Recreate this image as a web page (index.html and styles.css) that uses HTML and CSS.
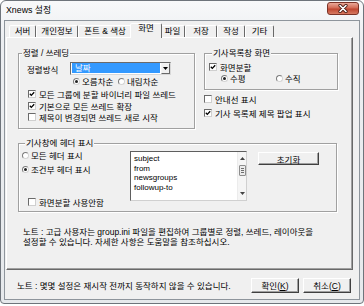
FILE: index.html
```html
<!DOCTYPE html>
<html>
<head>
  <title>Xnews 설정</title>
  <link rel="stylesheet" href="styles.css">
</head>
<body>
  <div class="window">
    <!-- Title bar -->
    <div class="titlebar">
      <span class="title">Xnews 설정</span>
      <button class="close-btn">
        <svg width="12" height="9" viewBox="0 0 12 9">
          <path d="M3 1.5 L9 7.5 M9 1.5 L3 7.5" stroke="#4a1e16" stroke-width="3.2" stroke-linecap="round"/>
          <path d="M3 1.5 L9 7.5 M9 1.5 L3 7.5" stroke="#fff" stroke-width="1.6" stroke-linecap="round"/>
        </svg>
      </button>
    </div>

    <div class="client">
      <!-- Tab strip -->
      <div class="tabs">
        <div class="tab tab-server">서버</div>
        <div class="tab tab-profile">개인정보</div>
        <div class="tab tab-font">폰트 &amp; 색상</div>
        <div class="tab tab-screen active">화면</div>
        <div class="tab tab-file">파일</div>
        <div class="tab tab-save">저장</div>
        <div class="tab tab-write">작성</div>
        <div class="tab tab-etc">기타</div>
      </div>

      <!-- Tab page -->
      <div class="panel">
        <div class="top-row">
          <fieldset class="group group-sort">
            <legend>정렬 / 쓰레딩</legend>
            <div class="sort-row">
              <span class="sort-label">정렬방식</span>
              <div class="combo">
                <span class="combo-value">날짜</span>
                <span class="combo-btn">
                  <svg width="5" height="3" viewBox="0 0 5 3"><path d="M0 0 H5 L2.5 3 Z" fill="#000"/></svg>
                </span>
              </div>
            </div>
            <div class="radio-row sort-order">
              <span class="radio-item order-asc"><span class="radio checked"></span>오름차순</span>
              <span class="radio-item"><span class="radio"></span>내림차순</span>
            </div>
            <div class="check-list">
              <div class="check-row"><span class="checkbox"><svg class="tick" width="6" height="6" viewBox="0 0 6 6"><path d="M0.8 2.8 L2.3 4.4 L5.2 1.2" fill="none" stroke="#000" stroke-width="1.3"/></svg></span>모든 그룹에 분할 바이너리 파일 쓰레드</div>
              <div class="check-row"><span class="checkbox"><svg class="tick" width="6" height="6" viewBox="0 0 6 6"><path d="M0.8 2.8 L2.3 4.4 L5.2 1.2" fill="none" stroke="#000" stroke-width="1.3"/></svg></span>기본으로 모든 쓰레드 확장</div>
              <div class="check-row"><span class="checkbox"></span>제목이 변경되면 쓰레드 새로 시작</div>
            </div>
          </fieldset>

          <div class="right-col">
            <fieldset class="group group-list">
              <legend>기사목록창 화면</legend>
              <div class="check-row split-row"><span class="checkbox"><svg class="tick" width="6" height="6" viewBox="0 0 6 6"><path d="M0.8 2.8 L2.3 4.4 L5.2 1.2" fill="none" stroke="#000" stroke-width="1.3"/></svg></span>화면분할</div>
              <div class="radio-row split-dir">
                <span class="radio-item dir-h"><span class="radio checked"></span>수평</span>
                <span class="radio-item"><span class="radio"></span>수직</span>
              </div>
            </fieldset>
            <div class="check-row side-check"><span class="checkbox"></span>안내선 표시</div>
            <div class="check-row side-check"><span class="checkbox"><svg class="tick" width="6" height="6" viewBox="0 0 6 6"><path d="M0.8 2.8 L2.3 4.4 L5.2 1.2" fill="none" stroke="#000" stroke-width="1.3"/></svg></span>기사 목록제 제목 팝업 표시</div>
          </div>
        </div>

        <fieldset class="group group-header">
          <legend>기사창에 헤더 표시</legend>
          <div class="header-body">
            <div class="header-opts">
              <div class="radio-row header-radio"><span class="radio-item"><span class="radio"></span>모든 헤더 표시</span></div>
              <div class="radio-row header-radio second"><span class="radio-item"><span class="radio checked"></span>조건부 헤더 표시</span></div>
              <div class="check-row nosplit"><span class="checkbox"></span>화면분할 사용안함</div>
            </div>
            <div class="listbox">
              <div class="list-items">
                <div>subject</div>
                <div>from</div>
                <div>newsgroups</div>
                <div>followup-to</div>
              </div>
              <div class="scrollbar">
                <span class="scroll-arrow">
                  <svg width="5" height="3" viewBox="0 0 5 3"><path d="M0 3 H5 L2.5 0 Z" fill="#444"/></svg>
                </span>
                <span class="scroll-thumb"><i></i><i></i><i></i></span>
                <span class="scroll-track"></span>
                <span class="scroll-arrow">
                  <svg width="5" height="3" viewBox="0 0 5 3"><path d="M0 0 H5 L2.5 3 Z" fill="#444"/></svg>
                </span>
              </div>
            </div>
            <button class="btn reset-btn">초기화</button>
          </div>
        </fieldset>

        <p class="note">노트 : 고급 사용자는 group.ini 파일을 편집하여 그룹별로 정렬, 쓰레드, 레이아웃을<br>설정할 수 있습니다. 자세한 사항은 도움말을 참조하십시오.</p>
      </div>

      <!-- Bottom bar -->
      <div class="footer">
        <span class="footer-note">노트 : 몇몇 설정은 재시작 전까지 동작하지 않을 수 있습니다.</span>
        <button class="btn dialog-btn">확인(<u>K</u>)</button>
        <button class="btn dialog-btn">취소(<u>C</u>)</button>
      </div>
    </div>
  </div>
</body>
</html>
```

FILE: styles.css
```css
* {
  box-sizing: border-box;
}
body {
  margin: 0;
  background: #fff;
  font-family: "Liberation Sans", "Noto Sans CJK KR", sans-serif;
  font-size: 8.5px;
  color: #000;
}
/* Window frame */
.window {
  width: 364px;
  height: 304px;
  border: 1px solid #6e747b;
  border-radius: 6px 6px 4px 4px;
  background: linear-gradient(#f8f9fa, #eceef1 40px, #e6e9ec);
  display: flex;
  flex-direction: column;
}
.titlebar {
  height: 19px;
  display: flex;
  align-items: flex-start;
  padding: 0 4px 0 5px;
}
.title {
  flex: 1;
  line-height: 19px;
  font-size: 8.8px;
}
.close-btn {
  width: 32px;
  height: 13px;
  margin-top: 1px;
  padding: 0;
  border: 1px solid #7b3327;
  border-radius: 3px;
  background: linear-gradient(#eaa998, #d26a54 45%, #bf4630 55%, #d77a62);
  display: flex;
  align-items: center;
  justify-content: center;
}
/* Client area */
.client {
  flex: 1;
  margin: 0 3px 3px;
  border: 1px solid #8e959c;
  background: #f0f0f0;
  padding-top: 2px;
  display: flex;
  flex-direction: column;
}
/* Tabs */
.tabs {
  height: 14px;
  display: flex;
  align-items: flex-end;
  padding-left: 4px;
  position: relative;
  z-index: 1;
}
.tab {
  height: 12px;
  line-height: 11px;
  text-align: center;
  white-space: nowrap;
  border: 1px solid;
  border-bottom: none;
  border-color: #fff #696969 transparent #fff;
  border-radius: 2px 2px 0 0;
  background: #f0f0f0;
}
.tab.active {
  height: 15px;
  line-height: 9px;
  margin: 0 -2px -1px;
  position: relative;
  z-index: 1;
}
.tab-server { width: 27px; }
.tab-profile { width: 42px; }
.tab-font { width: 54px; }
.tab-screen { width: 32px; }
.tab-file { width: 25px; }
.tab-save { width: 32px; }
.tab-write { width: 28px; }
.tab-etc { width: 29px; }
/* Tab page */
.panel {
  height: 233px;
  margin: 0 6px 0 1px;
  border: 1px solid;
  border-color: #fff #696969 #696969 #fff;
  box-shadow: inset -1px -1px #a0a0a0;
  padding: 0 14px 0 11px;
}
.top-row {
  display: flex;
  align-items: flex-start;
  gap: 9px;
  margin-top: 10px;
}
/* Group boxes */
.group {
  margin: 0;
  padding: 0;
  min-width: 0;
  border: 1px solid #a0a0a0;
  box-shadow: inset 1px 1px #fff, 1px 1px #fff;
}
.group legend {
  padding: 0 1px;
  margin-left: 3px;
  line-height: 10px;
  background: #f0f0f0;
}
.group-sort {
  width: 177px;
  padding-bottom: 5px;
}
.sort-row {
  height: 13px;
  margin-top: 4px;
  padding-left: 8px;
  display: flex;
  align-items: center;
}
.sort-label {
  width: 43px;
}
.combo {
  width: 101px;
  height: 13px;
  display: flex;
  background: #fff;
  border: 1px solid;
  border-color: #6a6a6a #d8d8d8 #d8d8d8 #6a6a6a;
}
.combo-value {
  flex: 1;
  margin: 0 1px 1px 1px;
  padding-left: 3px;
  line-height: 10px;
  background: #3399ff;
  color: #fff;
}
.combo-btn {
  width: 9px;
  border: 1px solid;
  border-color: #f4f4f4 #696969 #696969 #f4f4f4;
  background: #f0f0f0;
  display: flex;
  align-items: center;
  justify-content: center;
}
/* Radios and checkboxes */
.radio-row {
  height: 10px;
  display: flex;
  align-items: center;
  white-space: nowrap;
}
.radio-item {
  display: flex;
  align-items: center;
  gap: 2px;
}
.radio {
  width: 7px;
  height: 7px;
  border-radius: 50%;
  border: 1px solid;
  border-color: #7c7c7c #d4d4d4 #d4d4d4 #7c7c7c;
  background: #fff;
  display: flex;
  align-items: center;
  justify-content: center;
}
.radio.checked::after {
  content: "";
  width: 3px;
  height: 3px;
  border-radius: 50%;
  background: #222;
}
.sort-order {
  margin-top: 1px;
  padding-left: 54px;
}
.order-asc {
  width: 45px;
}
.check-list {
  margin-top: 2.5px;
  padding-left: 9px;
}
.check-row {
  height: 11.5px;
  display: flex;
  align-items: center;
  gap: 3px;
  white-space: nowrap;
  overflow: hidden;
}
.checkbox {
  flex: none;
  width: 8px;
  height: 8px;
  border: 1px solid;
  border-color: #6a6a6a #cfcfcf #cfcfcf #6a6a6a;
  background: #fff;
  display: flex;
}
.right-col {
  width: 134px;
}
.group-list {
  padding: 0 0 6px 4px;
}
.split-row {
  height: 11px;
  margin-top: 3px;
}
.split-dir {
  margin-top: 1px;
  padding-left: 12px;
}
.dir-h {
  width: 55px;
}
.side-check {
  height: 11px;
  margin-top: 3px;
}
/* Header group */
.group-header {
  width: 319px;
  margin-top: 9px;
  padding: 0 0 4px 3px;
}
.header-body {
  display: flex;
  align-items: flex-start;
}
.header-opts {
  width: 108px;
}
.header-radio {
  margin-top: 2px;
  gap: 3px;
}
.header-radio.second {
  margin-top: 4px;
}
.nosplit {
  height: 11px;
  margin-top: 22px;
  padding-left: 6px;
}
.listbox {
  width: 117px;
  height: 50px;
  margin-top: 3px;
  display: flex;
  background: #fff;
  border: 1px solid;
  border-color: #5e5e5e #d0d0d0 #d0d0d0 #5e5e5e;
}
.list-items {
  flex: 1;
  padding: 2px 0 0 3px;
  font-size: 8px;
  line-height: 9.7px;
}
.scrollbar {
  width: 9px;
  background: #f5f5f5;
  border-left: 1px solid #ececec;
  display: flex;
  flex-direction: column;
  align-items: center;
}
.scroll-arrow {
  height: 13px;
  display: flex;
  align-items: center;
}
.scroll-thumb {
  width: 7px;
  height: 11px;
  border: 1px solid #8d8d8d;
  border-radius: 1px;
  background: #ececec;
  display: flex;
  flex-direction: column;
  justify-content: center;
  gap: 1px;
  padding: 0 1px;
}
.scroll-thumb i {
  height: 1px;
  background: #6f6f6f;
}
.scroll-track {
  flex: 1;
}
/* Buttons */
.btn {
  padding: 0;
  font: inherit;
  color: #000;
  background: #f0f0f0;
  border: 1px solid;
  border-color: #fff #404040 #404040 #fff;
  box-shadow: inset -1px -1px #a0a0a0;
}
.reset-btn {
  width: 61px;
  height: 13px;
  margin: 4px 0 0 11px;
}
.note {
  margin: 15px 0 0 5px;
  line-height: 10px;
  white-space: nowrap;
}
/* Bottom bar */
.footer {
  flex: 1;
  display: flex;
  align-items: center;
  padding: 1px 8px 0 12px;
}
.footer-note {
  flex: 1;
  white-space: nowrap;
}
.dialog-btn {
  width: 48px;
  height: 15px;
  margin-left: 4px;
}
```
